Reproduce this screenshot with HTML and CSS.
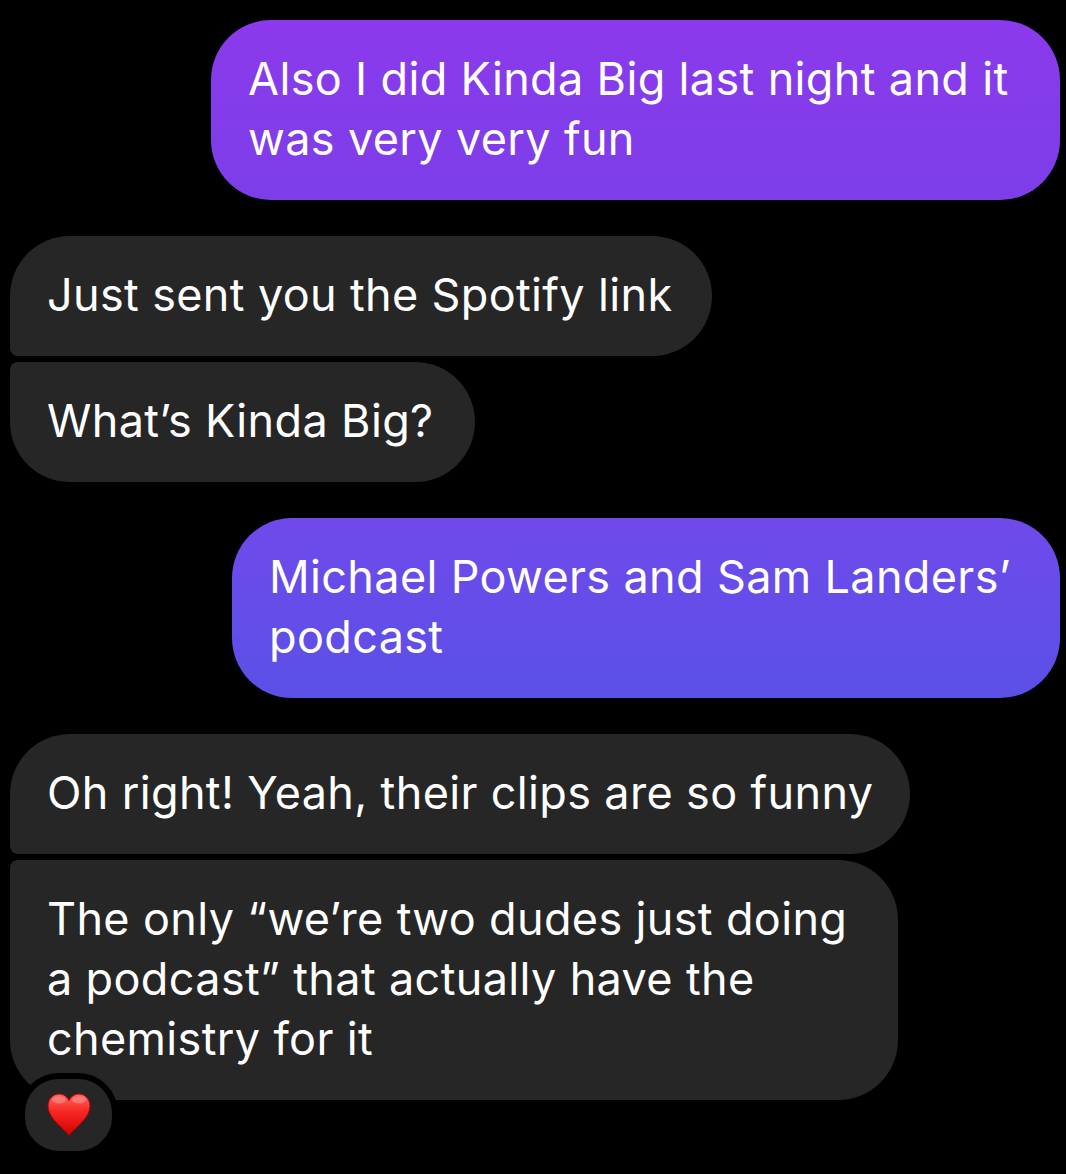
FILE: index.html
```html
<!DOCTYPE html>
<html lang="en">

<head>
    <meta charset="UTF-8">
    <meta name="viewport" content="width=device-width, initial-scale=1.0">
    <title>Messages</title>
    <link rel="stylesheet" href="styles.css">
</head>

<body>
    <main class="chat-cont">
        <div class="message-group">
            <p class="bubble sent sent-first">Also I did Kinda Big last night and it<br>was very very fun</p>
        </div>
        <div class="message-group">
            <p class="bubble received group-top w-spotify">Just sent you the Spotify link</p>
            <p class="bubble received group-bottom w-kinda">What’s Kinda Big?</p>
        </div>
        <div class="message-group">
            <p class="bubble sent sent-second">Michael Powers and Sam Landers’<br>podcast</p>
        </div>
        <div class="message-group">
            <p class="bubble received group-top w-clips">Oh right! Yeah, their clips are so funny</p>
            <div class="reaction-wrap">
                <p class="bubble received group-bottom w-dudes">The only “we’re two dudes just doing<br>a podcast” that actually have the<br>chemistry for it</p>
                <div class="reaction">
                    <svg class="heart" viewBox="0 0 44 44" aria-label="heart reaction">
                        <defs>
                            <linearGradient id="heart_fill" x1="0" y1="0" x2="0" y2="1">
                                <stop offset="0" stop-color="#ff6a62"></stop>
                                <stop offset="0.4" stop-color="#f82a24"></stop>
                                <stop offset="1" stop-color="#d00000"></stop>
                            </linearGradient>
                        </defs>
                        <path fill="url(#heart_fill)" stroke="#b80000" stroke-width="1" d="M22 42.500 C18 36 1 26 1 13 C1 6 6 1 12 1 C16.500 1 20 3.500 22 7.500 C24 3.500 27.500 1 32 1 C38 1 43 6 43 13 C43 26 26 36 22 42.500 Z"></path>
                        <ellipse cx="12" cy="7" rx="7" ry="3.500" fill="#ffffff" opacity="0.22"></ellipse>
                        <ellipse cx="32" cy="7" rx="7" ry="3.500" fill="#ffffff" opacity="0.22"></ellipse>
                    </svg>
                </div>
            </div>
        </div>
    </main>
</body>

</html>
```
FILE: styles.css
```css
* {
    box-sizing: border-box;
}

body {
    padding: 0;
    margin: 0;
    background-color: #000000;
    font-family: Inter, "Liberation Sans", sans-serif;
}

.chat-cont {
    width: 100%;
    min-height: 1174px;
    padding: 20px 6px 74px 10px;
    display: flex;
    flex-direction: column;
    gap: 36px;
}

.message-group {
    display: flex;
    flex-direction: column;
    gap: 6px;
}

.bubble {
    margin: 0;
    padding: 29px 0 31px 37px;
    font-size: 45px;
    font-weight: 380;
    line-height: 60px;
    letter-spacing: 0.35px;
    color: #ffffff;
    white-space: nowrap;
    border-radius: 60px;
}

.sent {
    align-self: flex-end;
}

.sent-first {
    width: 849px;
    background-image: linear-gradient(#8b3aec, #7c3ee8);
}

.sent-second {
    width: 828px;
    background-image: linear-gradient(#6f4aeb, #5a50e6);
}

.received {
    background-color: #262626;
}

.group-top {
    border-bottom-left-radius: 8px;
}

.group-bottom {
    border-top-left-radius: 8px;
}

.w-spotify {
    width: 702px;
}

.w-kinda {
    width: 465px;
}

.w-clips {
    width: 900px;
}

.w-dudes {
    width: 888px;
}

.reaction-wrap {
    position: relative;
}

.reaction {
    position: absolute;
    left: 9px;
    top: 213px;
    width: 99px;
    height: 84px;
    display: flex;
    align-items: center;
    justify-content: center;
    background-color: #262626;
    border: 6px solid #000000;
    border-radius: 40px;
}

.heart {
    width: 44px;
    height: 44px;
}
```
